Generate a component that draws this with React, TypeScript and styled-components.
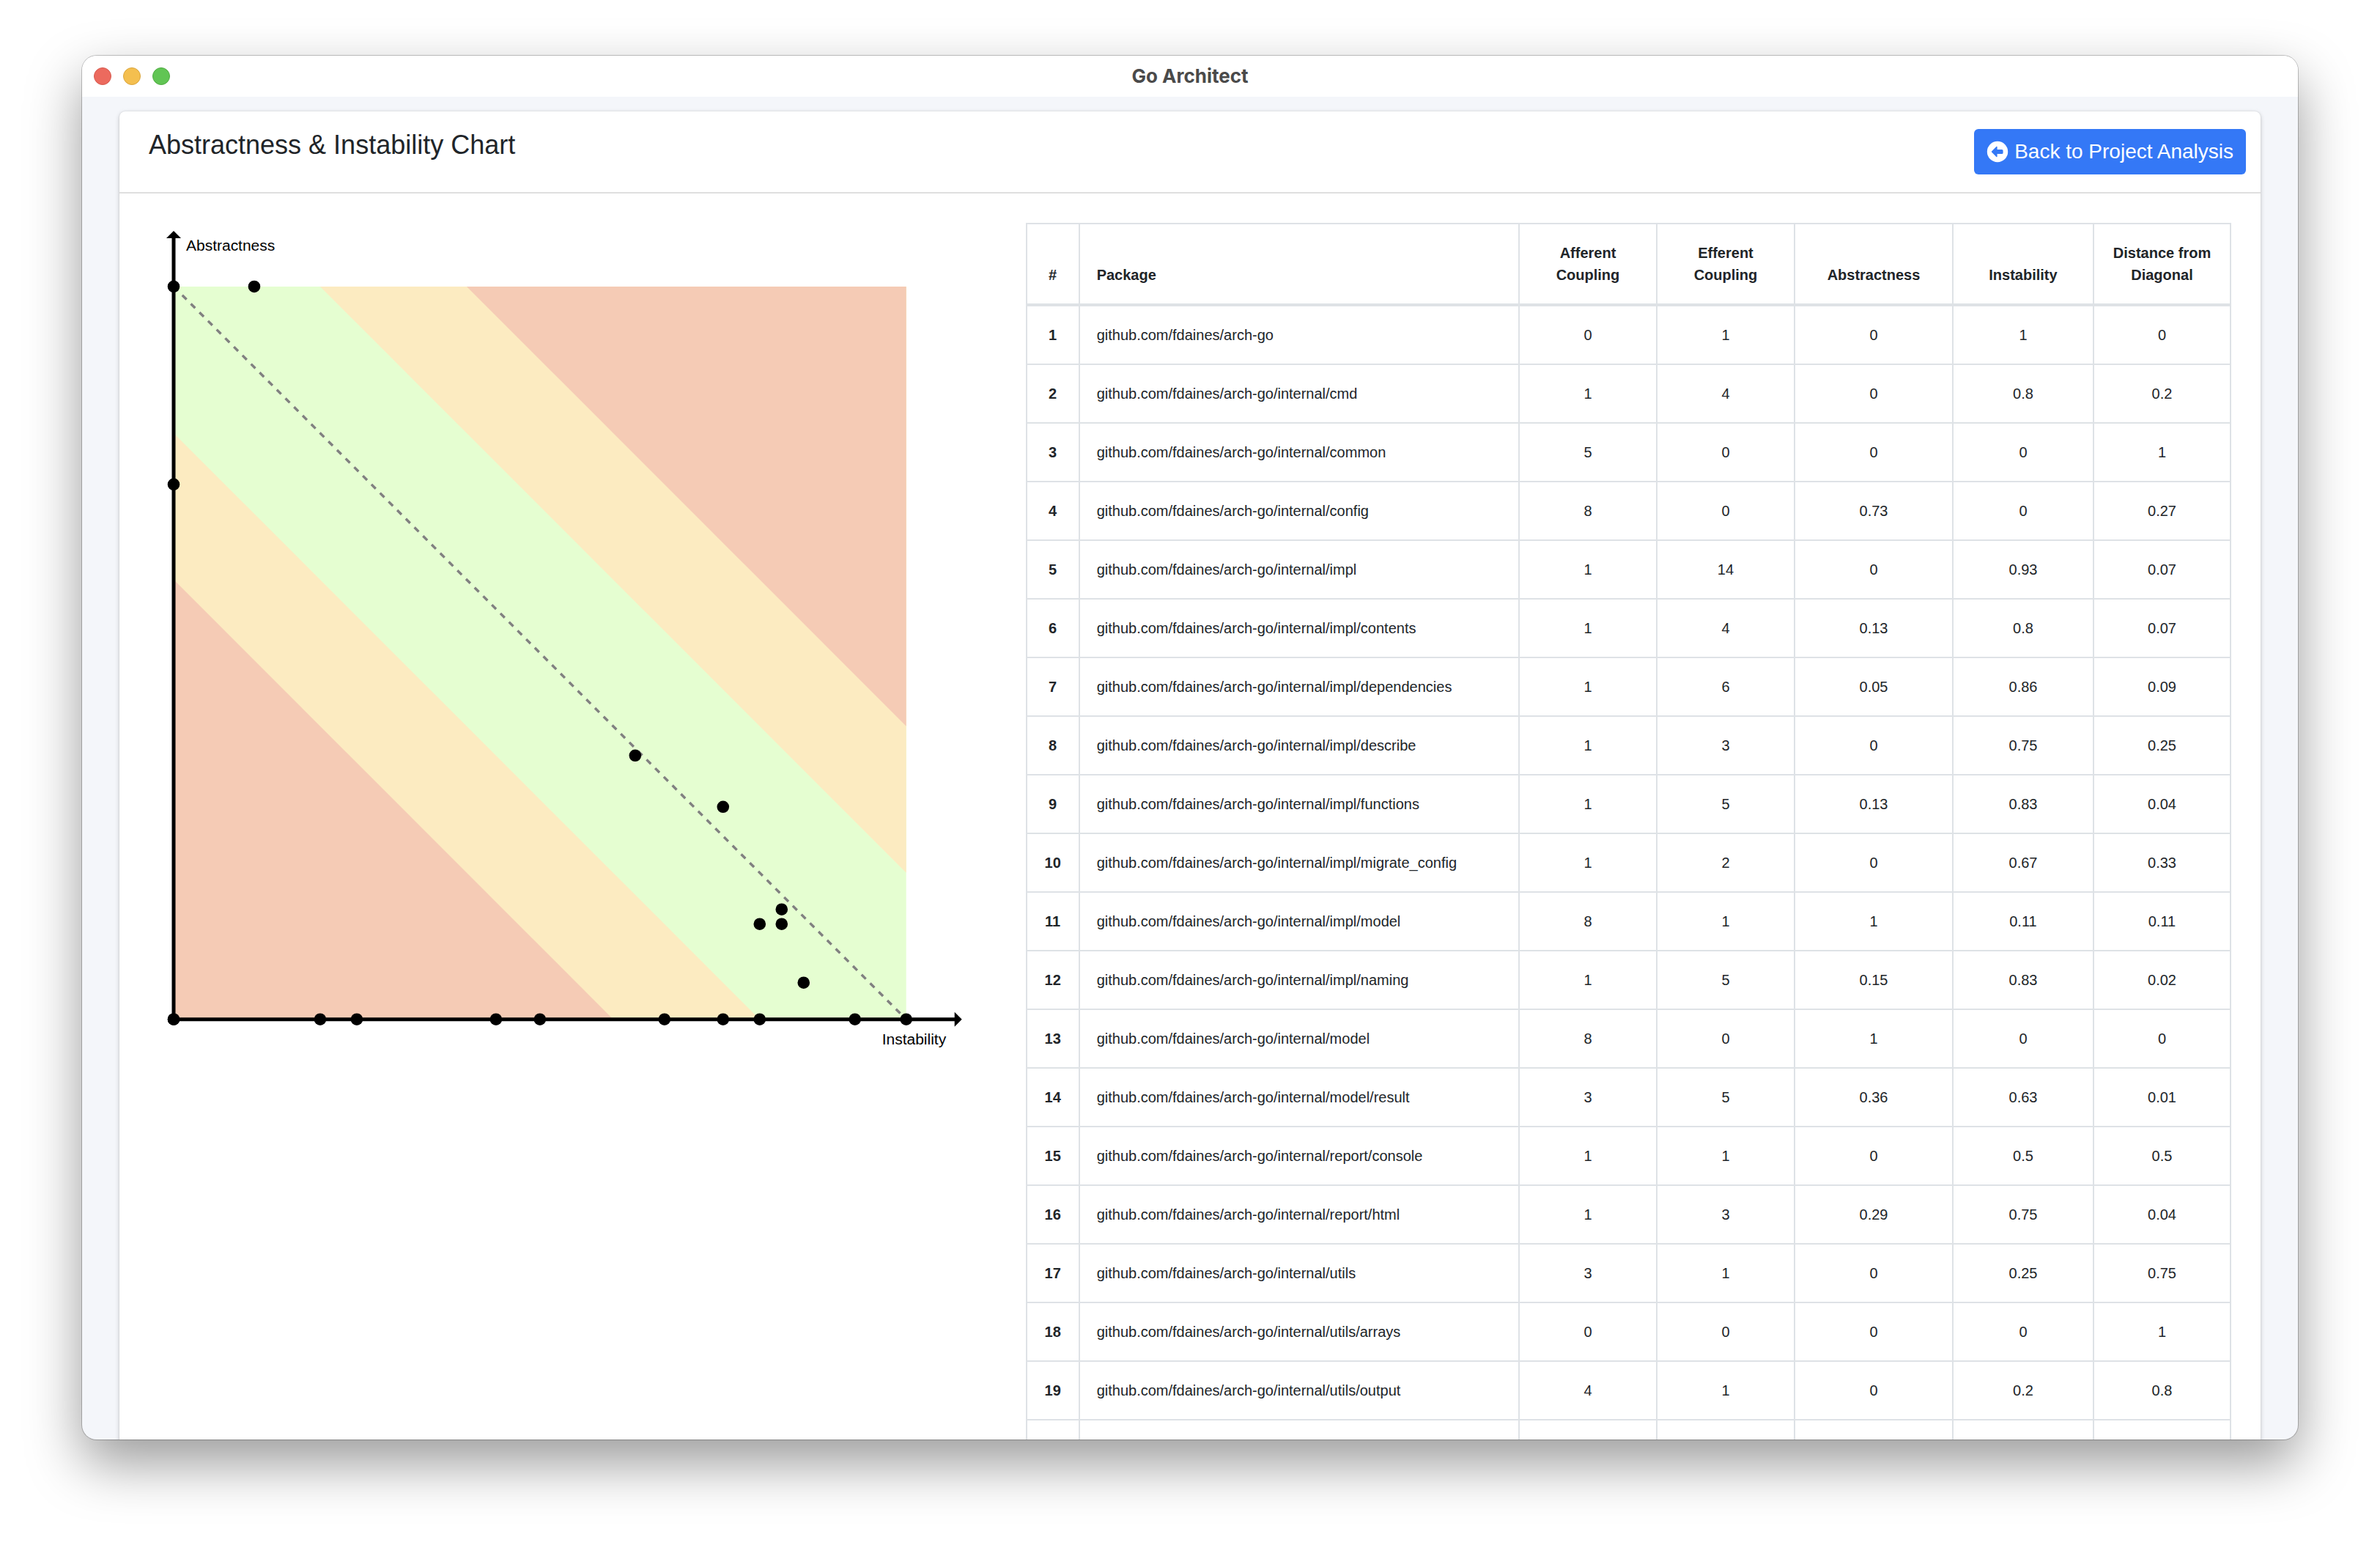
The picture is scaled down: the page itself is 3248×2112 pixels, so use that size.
import React from "react";
import styled, { createGlobalStyle } from "styled-components";

const GlobalStyle = createGlobalStyle`
  *, *::before, *::after { box-sizing: border-box; }
  body {
    margin: 0;
    background: #ffffff;
    color: #212529;
    font-family: "Liberation Sans", Helvetica, Arial, sans-serif;
    font-size: 20px;
    line-height: 30px;
  }
`;

const Desktop = styled.div`
  display: flex;
  height: 100vh;
  padding: 76px 112px 148px;
  overflow: hidden;
`;

const Window = styled.div`
  flex: 1;
  min-width: 0;
  display: flex;
  flex-direction: column;
  overflow: hidden;
  border-radius: 20px;
  background: #f4f6fa;
  box-shadow: 0 0 0 1px rgba(0, 0, 0, 0.22), 0 32px 76px rgba(0, 0, 0, 0.4);
`;

const TitleBar = styled.header`
  flex: none;
  display: grid;
  grid-template-columns: 1fr auto 1fr;
  align-items: center;
  height: 56px;
  padding: 0 16px;
  background: #ffffff;
`;

const WindowControls = styled.div`
  display: flex;
  gap: 16px;
`;

const ControlDot = styled.button<{ $fill: string; $edge: string }>`
  width: 24px;
  height: 24px;
  padding: 0;
  border: 1px solid ${(p) => p.$edge};
  border-radius: 50%;
  background: ${(p) => p.$fill};
`;

const WindowTitle = styled.div`
  color: #4a4a4a;
  font-family: Inter, "Liberation Sans", sans-serif;
  font-size: 26px;
  font-weight: 700;
`;

const Page = styled.main`
  flex: 1;
  min-height: 0;
  overflow: hidden;
  padding: 20px 51px 0;
`;

const Card = styled.section`
  border-radius: 8px;
  background: #ffffff;
  box-shadow: 0 0 2px rgba(0, 0, 0, 0.13), 0 2px 6px rgba(0, 0, 0, 0.2);
`;

const CardHeader = styled.div`
  display: flex;
  justify-content: space-between;
  align-items: flex-start;
  padding: 24px 20px 24px 40px;
  border-bottom: 2px solid #dfdfdf;
`;

const CardTitle = styled.h1`
  margin: 0;
  font-size: 36px;
  font-weight: 400;
  line-height: 44px;
`;

const BackButton = styled.button`
  display: flex;
  align-items: center;
  gap: 8px;
  height: 62px;
  padding: 0 17px;
  border: 0;
  border-radius: 6px;
  background: #3478f6;
  color: #ffffff;
  font-family: inherit;
  font-size: 28px;
`;

const CardBody = styled.div`
  display: grid;
  grid-template-columns: 5fr 7fr;
  padding: 40px 25px;
`;

const Column = styled.div`
  min-width: 0;
  padding: 0 15px;
`;

const Chart = styled.svg`
  display: block;
  width: 100%;
  height: auto;
  font-size: 21px;
`;

const MetricsTable = styled.table`
  width: 100%;
  table-layout: fixed;
  border-collapse: collapse;
`;

const Col = styled.col<{ $width?: number }>`
  width: ${(p) => (p.$width ? `${p.$width}px` : "auto")};
`;

const HeadCell = styled.th<{ $left?: boolean }>`
  padding: 24px 23px;
  border: 2px solid #dee2e6;
  border-bottom-width: 4px;
  text-align: ${(p) => (p.$left ? "left" : "center")};
  vertical-align: bottom;
`;

const IndexCell = styled.th`
  height: 80px;
  padding: 24px 12px;
  border: 2px solid #dee2e6;
`;

const Cell = styled.td<{ $left?: boolean }>`
  padding: 24px 23px;
  border: 2px solid #dee2e6;
  text-align: ${(p) => (p.$left ? "left" : "center")};
`;

type Row = [string, number, number, number, number, number];

const ROOT = "github.com/fdaines/arch-go";

// package suffix, afferent, efferent, abstractness, instability, distance
const rows: Row[] = [
  ["", 0, 1, 0, 1, 0],
  ["/internal/cmd", 1, 4, 0, 0.8, 0.2],
  ["/internal/common", 5, 0, 0, 0, 1],
  ["/internal/config", 8, 0, 0.73, 0, 0.27],
  ["/internal/impl", 1, 14, 0, 0.93, 0.07],
  ["/internal/impl/contents", 1, 4, 0.13, 0.8, 0.07],
  ["/internal/impl/dependencies", 1, 6, 0.05, 0.86, 0.09],
  ["/internal/impl/describe", 1, 3, 0, 0.75, 0.25],
  ["/internal/impl/functions", 1, 5, 0.13, 0.83, 0.04],
  ["/internal/impl/migrate_config", 1, 2, 0, 0.67, 0.33],
  ["/internal/impl/model", 8, 1, 1, 0.11, 0.11],
  ["/internal/impl/naming", 1, 5, 0.15, 0.83, 0.02],
  ["/internal/model", 8, 0, 1, 0, 0],
  ["/internal/model/result", 3, 5, 0.36, 0.63, 0.01],
  ["/internal/report/console", 1, 1, 0, 0.5, 0.5],
  ["/internal/report/html", 1, 3, 0.29, 0.75, 0.04],
  ["/internal/utils", 3, 1, 0, 0.25, 0.75],
  ["/internal/utils/arrays", 0, 0, 0, 0, 1],
  ["/internal/utils/output", 4, 1, 0, 0.2, 0.8],
];

const points = [
  ...rows.map((r) => ({ x: r[4], y: r[3] })),
  { x: 0.44, y: 0 },
];

const LEFT = 34;
const TOP = 87;
const SIZE = 1000;
const px = (v: number) => LEFT + v * SIZE;
const py = (v: number) => TOP + (1 - v) * SIZE;
const shape = (...pts: [number, number][]) =>
  pts.map(([x, y]) => `${px(x)},${py(y)}`).join(" ");

function InstabilityChart() {
  return (
    <Chart viewBox="0 0 1167 1167" role="img" aria-label="Abstractness and instability">
      <rect x={px(0)} y={py(1)} width={SIZE} height={SIZE} fill="#e5fed1" />
      <polygon points={shape([0.2, 1], [1, 1], [1, 0.2])} fill="#fcebc1" />
      <polygon points={shape([0.4, 1], [1, 1], [1, 0.4])} fill="#f5cbb5" />
      <polygon points={shape([0, 0.8], [0, 0], [0.8, 0])} fill="#fcebc1" />
      <polygon points={shape([0, 0.6], [0, 0], [0.6, 0])} fill="#f5cbb5" />
      <line
        x1={px(0)} y1={py(1)} x2={px(1)} y2={py(0)}
        stroke="#808080" strokeWidth="3.4" strokeDasharray="8.3 8.3"
      />
      <line x1={px(0)} y1={py(0)} x2={px(0)} y2="20" stroke="#000" strokeWidth="5" />
      <line x1={px(0)} y1={py(0)} x2="1102" y2={py(0)} stroke="#000" strokeWidth="5" />
      <polygon points="24,21 34,11 44,21" />
      <polygon points="1100,1077 1110,1087 1100,1097" />
      {points.map((p, i) => (
        <circle key={i} cx={px(p.x)} cy={py(p.y)} r="8.3" />
      ))}
      <text x="51" y="38">Abstractness</text>
      <text x="1001" y="1121">Instability</text>
    </Chart>
  );
}

function BackIcon() {
  return (
    <svg width="30" height="30" viewBox="0 0 30 30" aria-hidden="true">
      <circle cx="15" cy="15" r="14.2" fill="#ffffff" />
      <path
        d="M7 14.5 L13.4 8.1 Q14.6 7.2 14.6 8.8 V12 H21 Q22.6 12 22.6 13.6 V16.4 Q22.6 18 21 18 H14.6 V21.2 Q14.6 22.8 13.4 21.9 L7 15.5 Q6.5 15 7 14.5 Z"
        fill="#3478f6"
      />
    </svg>
  );
}

export default function App() {
  return (
    <>
      <GlobalStyle />
      <Desktop>
        <Window>
          <TitleBar>
            <WindowControls>
              <ControlDot aria-label="Close" $fill="#ec6a5e" $edge="#d65a4f" />
              <ControlDot aria-label="Minimize" $fill="#f4bf4f" $edge="#d9a53e" />
              <ControlDot aria-label="Zoom" $fill="#61c554" $edge="#50ab43" />
            </WindowControls>
            <WindowTitle>Go Architect</WindowTitle>
          </TitleBar>
          <Page>
            <Card>
              <CardHeader>
                <CardTitle>Abstractness &amp; Instability Chart</CardTitle>
                <BackButton type="button">
                  <BackIcon />
                  Back to Project Analysis
                </BackButton>
              </CardHeader>
              <CardBody>
                <Column>
                  <InstabilityChart />
                </Column>
                <Column>
                  <MetricsTable>
                    <colgroup>
                      <Col $width={72} />
                      <Col />
                      <Col $width={188} />
                      <Col $width={188} />
                      <Col $width={216} />
                      <Col $width={192} />
                      <Col $width={187} />
                    </colgroup>
                    <thead>
                      <tr>
                        <HeadCell scope="col">#</HeadCell>
                        <HeadCell scope="col" $left>Package</HeadCell>
                        <HeadCell scope="col">Afferent Coupling</HeadCell>
                        <HeadCell scope="col">Efferent Coupling</HeadCell>
                        <HeadCell scope="col">Abstractness</HeadCell>
                        <HeadCell scope="col">Instability</HeadCell>
                        <HeadCell scope="col">Distance from Diagonal</HeadCell>
                      </tr>
                    </thead>
                    <tbody>
                      {rows.map(([suffix, ...values], i) => (
                        <tr key={suffix}>
                          <IndexCell scope="row">{i + 1}</IndexCell>
                          <Cell $left>{ROOT + suffix}</Cell>
                          {values.map((v, j) => (
                            <Cell key={j}>{v}</Cell>
                          ))}
                        </tr>
                      ))}
                      <tr>
                        <IndexCell scope="row" />
                        <Cell $left />
                        <Cell />
                        <Cell />
                        <Cell />
                        <Cell />
                        <Cell />
                      </tr>
                    </tbody>
                  </MetricsTable>
                </Column>
              </CardBody>
            </Card>
          </Page>
        </Window>
      </Desktop>
    </>
  );
}
